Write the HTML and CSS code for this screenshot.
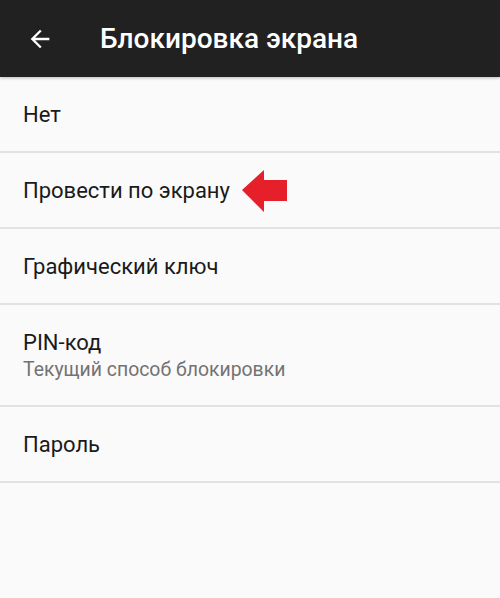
FILE: index.html
```html
<!DOCTYPE html>
<html lang="ru">

<head>
  <meta charset="UTF-8">
  <meta name="viewport" content="width=device-width, initial-scale=1.0">
  <link rel="stylesheet" href="styles.css">
  <title>Блокировка экрана</title>
</head>

<body>

  <div class="toolbar">
    <div class="back-btn">
      <svg width="24" height="24" viewBox="0 0 24 24">
        <path d="M20 11H7.83l5.59-5.59L12 4l-8 8 8 8 1.41-1.41L7.83 13H20v-2z" fill="#fff"/>
      </svg>
    </div>
    <h1 class="title">Блокировка экрана</h1>
  </div>

  <div class="list">
    <div class="item">
      <div class="item-title">Нет</div>
    </div>
    <div class="item">
      <div class="item-title">Провести по экрану</div>
      <svg class="pointer" width="45" height="42" viewBox="0 0 45 42">
        <polygon points="0,20 22,0 22,10 45,10 45,31 22,31 22,42" fill="#e5202a"/>
      </svg>
    </div>
    <div class="item">
      <div class="item-title">Графический ключ</div>
    </div>
    <div class="item item-tall">
      <div>
        <div class="item-title">PIN-код</div>
        <div class="item-sub">Текущий способ блокировки</div>
      </div>
    </div>
    <div class="item">
      <div class="item-title">Пароль</div>
    </div>
  </div>

</body>

</html>
```

FILE: styles.css
```css
body {
  margin: 0;
  background-color: #fafafa;
  font-family: Roboto, 'Noto Sans', sans-serif;
  color: #212121;
}

.toolbar {
  background-color: #212121;
  height: 77px;
  display: flex;
  align-items: center;
  box-shadow: 0 1px 3px rgba(0, 0, 0, 0.25);
}

.back-btn {
  width: 28px;
  height: 28px;
  margin-left: 26px;
  display: flex;
  align-items: center;
  justify-content: center;
}

.back-btn svg {
  width: 28px;
  height: 28px;
}

.title {
  margin: 0 0 0 46px;
  font-size: 28px;
  font-weight: 500;
  color: #fff;
}

.item {
  height: 74px;
  padding-left: 23px;
  display: flex;
  align-items: center;
  border-bottom: 2px solid #e2e2e2;
}

.item-tall {
  height: 100px;
}

.item-title {
  font-size: 22px;
  color: #1a1a1a;
}

.item-sub {
  font-size: 19.4px;
  color: #737373;
  margin-top: 3px;
}

.pointer {
  margin-left: 12px;
  margin-top: 2px;
}
```
